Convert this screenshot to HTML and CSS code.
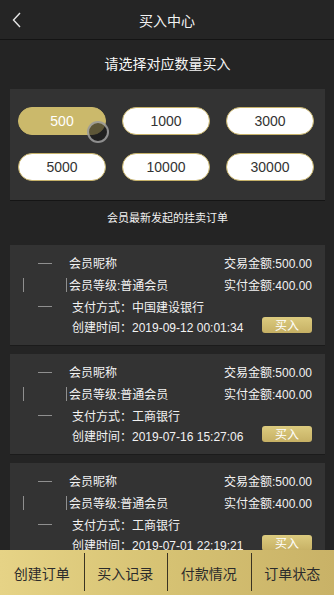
FILE: index.html
```html
<!DOCTYPE html>
<html lang="zh">
<head>
<meta charset="utf-8">
<title>买入中心</title>
<link rel="stylesheet" href="styles.css">
</head>
<body>
<header class="topbar">
  <span class="back"><svg width="10" height="16" viewBox="0 0 10 16"><path d="M8 1 L1.5 8 L8 15" fill="none" stroke="#e6e6e6" stroke-width="1.4"/></svg></span>
  <h1 class="title">买入中心</h1>
</header>
<main class="page">
  <p class="subtitle">请选择对应数量买入</p>
  <section class="panel">
    <div class="amounts">
      <button class="amt active">500<span class="touch"></span></button>
      <button class="amt">1000</button>
      <button class="amt">3000</button>
      <button class="amt">5000</button>
      <button class="amt">10000</button>
      <button class="amt">30000</button>
    </div>
  </section>
  <p class="section-title">会员最新发起的挂卖订单</p>

  <div class="card">
    <div class="head">
      <span class="avatar"><svg width="44" height="44" viewBox="0 0 44 44"><g stroke="rgba(255,255,255,0.45)" stroke-width="1"><path d="M15 0.5 H29"/><path d="M15 43.5 H29"/><path d="M0.5 15 V29"/><path d="M43.5 15 V29"/></g></svg></span>
      <div class="meta">
        <div class="line"><span>会员昵称</span><span>交易金额:500.00</span></div>
        <div class="line"><span>会员等级:普通会员</span><span>实付金额:400.00</span></div>
      </div>
    </div>
    <div class="pay">支付方式：中国建设银行</div>
    <div class="foot"><span class="time">创建时间：2019-09-12 00:01:34</span><button class="buy">买入</button></div>
  </div>

  <div class="card">
    <div class="head">
      <span class="avatar"><svg width="44" height="44" viewBox="0 0 44 44"><g stroke="rgba(255,255,255,0.45)" stroke-width="1"><path d="M15 0.5 H29"/><path d="M15 43.5 H29"/><path d="M0.5 15 V29"/><path d="M43.5 15 V29"/></g></svg></span>
      <div class="meta">
        <div class="line"><span>会员昵称</span><span>交易金额:500.00</span></div>
        <div class="line"><span>会员等级:普通会员</span><span>实付金额:400.00</span></div>
      </div>
    </div>
    <div class="pay">支付方式：工商银行</div>
    <div class="foot"><span class="time">创建时间：2019-07-16 15:27:06</span><button class="buy">买入</button></div>
  </div>

  <div class="card">
    <div class="head">
      <span class="avatar"><svg width="44" height="44" viewBox="0 0 44 44"><g stroke="rgba(255,255,255,0.45)" stroke-width="1"><path d="M15 0.5 H29"/><path d="M15 43.5 H29"/><path d="M0.5 15 V29"/><path d="M43.5 15 V29"/></g></svg></span>
      <div class="meta">
        <div class="line"><span>会员昵称</span><span>交易金额:500.00</span></div>
        <div class="line"><span>会员等级:普通会员</span><span>实付金额:400.00</span></div>
      </div>
    </div>
    <div class="pay">支付方式：工商银行</div>
    <div class="foot"><span class="time">创建时间：2019-07-01 22:19:21</span><button class="buy">买入</button></div>
  </div>
</main>
<nav class="tabbar">
  <a class="tab">创建订单</a>
  <a class="tab">买入记录</a>
  <a class="tab">付款情况</a>
  <a class="tab">订单状态</a>
</nav>
</body>
</html>
```

FILE: styles.css
```css
* { box-sizing: border-box; }
html, body { margin: 0; padding: 0; }
body {
  background: #242424;
  color: #fff;
  font-family: "Liberation Sans", Arial, "Noto Sans CJK SC", sans-serif;
  width: 334px;
  height: 595px;
  overflow: hidden;
}
.topbar {
  height: 40px;
  background: #252525;
  border-bottom: 1px solid #141414;
  display: flex;
  align-items: center;
  justify-content: center;
  position: relative;
}
.back {
  position: absolute;
  left: 12px;
  top: 12px;
  width: 10px;
  height: 16px;
  display: block;
}
.back svg { display: block; }
.title {
  margin: 0;
  font-size: 14px;
  font-weight: normal;
  line-height: 20px;
  color: #f2f2f2;
  padding-top: 2px;
}
.page {
  padding: 0 9px 60px 10px;
}
.subtitle {
  margin: 0;
  padding: 14px 0 15px;
  text-align: center;
  font-size: 14px;
  line-height: 20px;
  color: #f5f5f5;
}
.panel {
  background: #333333;
  padding: 18px 11px 19px 8px;
  box-shadow: 0 1px 0 #151515;
}
.amounts {
  display: grid;
  grid-template-columns: 88px 88px 88px;
  column-gap: 16px;
  row-gap: 18px;
}
.amt {
  position: relative;
  height: 28px;
  border-radius: 14px;
  border: 1px solid #c6b26a;
  background: #fff;
  color: #333;
  font-family: "Liberation Sans", Arial, sans-serif;
  font-size: 14px;
  padding: 0;
  line-height: 26px;
}
.amt.active {
  background: #cbb96b;
  border-color: #cbb96b;
  color: #fff;
}
.touch {
  position: absolute;
  left: 68px;
  top: 13px;
  width: 22px;
  height: 22px;
  border-radius: 50%;
  background: rgba(20, 20, 20, 0.6);
  border: 2px solid rgba(190, 190, 190, 0.7);
}
.section-title {
  margin: 10px 0 18px;
  text-align: center;
  font-size: 11px;
  line-height: 17px;
  color: #f2f2f2;
}
.card {
  background: #333333;
  height: 100px;
  padding: 8px 13px 0 13px;
  margin-bottom: 9px;
  box-shadow: 0 1px 0 #1b1b1b;
  font-size: 12px;
  color: #f2f2f2;
}
.head {
  display: flex;
}
.avatar {
  width: 44px;
  height: 44px;
  flex: 0 0 44px;
  margin-top: 10px;
  margin-bottom: -10px;
}
.avatar svg { display: block; }
.meta {
  flex: 1;
  margin-left: 2px;
}
.line {
  display: flex;
  justify-content: space-between;
  line-height: 22px;
}
.pay {
  margin-left: 49px;
  line-height: 22px;
}
.foot {
  margin-left: 49px;
  display: flex;
  justify-content: space-between;
  line-height: 18px;
}
.buy {
  width: 50px;
  height: 16px;
  margin-top: -2px;
  border: none;
  border-radius: 3px;
  background: linear-gradient(180deg, #dccb7f 0%, #c6b064 100%);
  color: #fff;
  font-family: "Noto Sans CJK SC", sans-serif;
  font-size: 12px;
  line-height: 16px;
  padding: 0;
}
.tabbar {
  position: fixed;
  left: 0;
  bottom: 0;
  width: 334px;
  height: 45px;
  display: flex;
  background: linear-gradient(90deg, #e6d386 0%, #d6c273 50%, #c9b267 100%);
}
.tab {
  flex: 1;
  display: flex;
  align-items: center;
  justify-content: center;
  font-size: 14px;
  color: #2b2b2b;
  font-family: "Noto Sans CJK SC", sans-serif;
  position: relative;
}
.tab + .tab::before {
  content: "";
  position: absolute;
  left: 0;
  top: 3px;
  bottom: 4px;
  width: 1px;
  background: #3a3322;
}
```
